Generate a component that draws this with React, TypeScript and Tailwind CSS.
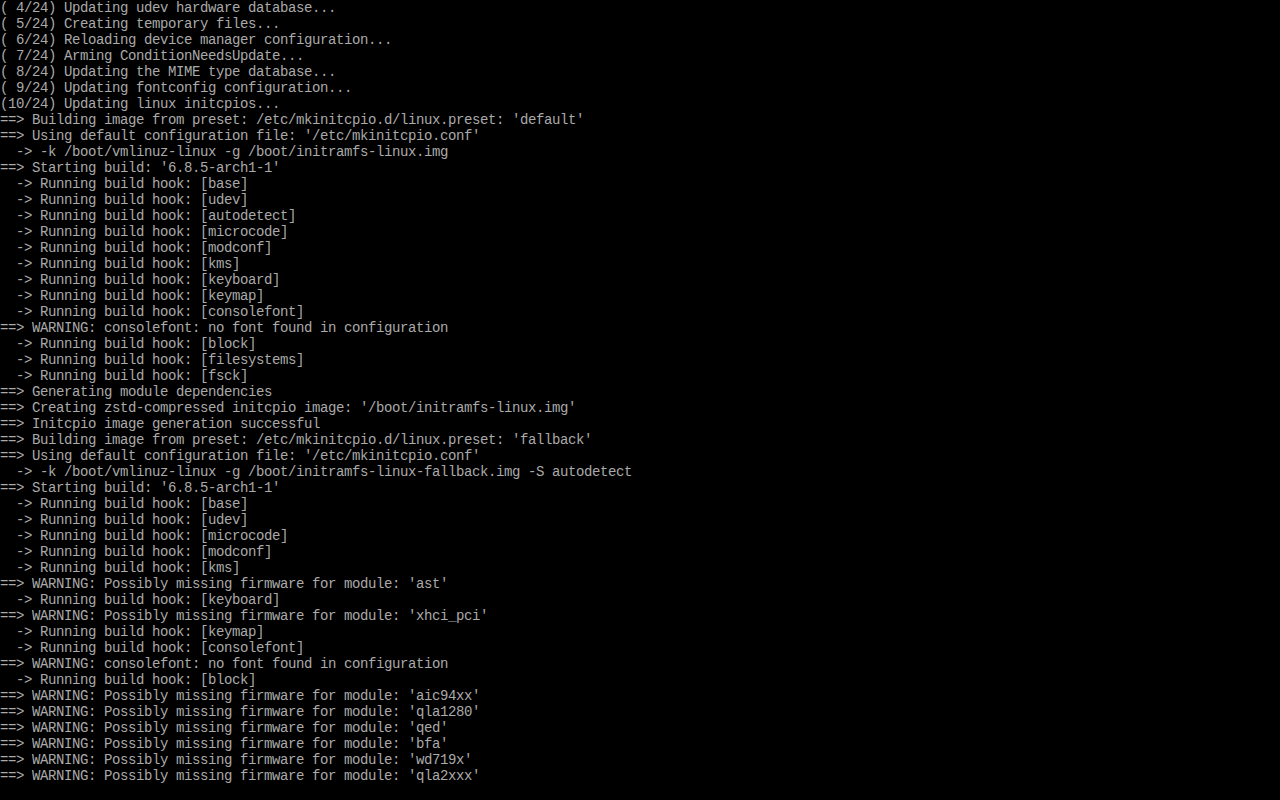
const lines: string[] = [
  "( 4/24) Updating udev hardware database...",
  "( 5/24) Creating temporary files...",
  "( 6/24) Reloading device manager configuration...",
  "( 7/24) Arming ConditionNeedsUpdate...",
  "( 8/24) Updating the MIME type database...",
  "( 9/24) Updating fontconfig configuration...",
  "(10/24) Updating linux initcpios...",
  "==> Building image from preset: /etc/mkinitcpio.d/linux.preset: 'default'",
  "==> Using default configuration file: '/etc/mkinitcpio.conf'",
  "  -> -k /boot/vmlinuz-linux -g /boot/initramfs-linux.img",
  "==> Starting build: '6.8.5-arch1-1'",
  "  -> Running build hook: [base]",
  "  -> Running build hook: [udev]",
  "  -> Running build hook: [autodetect]",
  "  -> Running build hook: [microcode]",
  "  -> Running build hook: [modconf]",
  "  -> Running build hook: [kms]",
  "  -> Running build hook: [keyboard]",
  "  -> Running build hook: [keymap]",
  "  -> Running build hook: [consolefont]",
  "==> WARNING: consolefont: no font found in configuration",
  "  -> Running build hook: [block]",
  "  -> Running build hook: [filesystems]",
  "  -> Running build hook: [fsck]",
  "==> Generating module dependencies",
  "==> Creating zstd-compressed initcpio image: '/boot/initramfs-linux.img'",
  "==> Initcpio image generation successful",
  "==> Building image from preset: /etc/mkinitcpio.d/linux.preset: 'fallback'",
  "==> Using default configuration file: '/etc/mkinitcpio.conf'",
  "  -> -k /boot/vmlinuz-linux -g /boot/initramfs-linux-fallback.img -S autodetect",
  "==> Starting build: '6.8.5-arch1-1'",
  "  -> Running build hook: [base]",
  "  -> Running build hook: [udev]",
  "  -> Running build hook: [microcode]",
  "  -> Running build hook: [modconf]",
  "  -> Running build hook: [kms]",
  "==> WARNING: Possibly missing firmware for module: 'ast'",
  "  -> Running build hook: [keyboard]",
  "==> WARNING: Possibly missing firmware for module: 'xhci_pci'",
  "  -> Running build hook: [keymap]",
  "  -> Running build hook: [consolefont]",
  "==> WARNING: consolefont: no font found in configuration",
  "  -> Running build hook: [block]",
  "==> WARNING: Possibly missing firmware for module: 'aic94xx'",
  "==> WARNING: Possibly missing firmware for module: 'qla1280'",
  "==> WARNING: Possibly missing firmware for module: 'qed'",
  "==> WARNING: Possibly missing firmware for module: 'bfa'",
  "==> WARNING: Possibly missing firmware for module: 'wd719x'",
  "==> WARNING: Possibly missing firmware for module: 'qla2xxx'",
];

export default function App() {
  return (
    <div className="w-[1280px] h-[800px] bg-black overflow-hidden">
      {/* tty output */}
      <div className="flex flex-col font-['Liberation_Mono','DejaVu_Sans_Mono',monospace] text-[14px] tracking-[-0.4px] leading-[16px] text-[#aaaaaa]">
        {lines.map((line, i) => (
          <div key={i} className="h-4 whitespace-pre">
            {line}
          </div>
        ))}
      </div>
    </div>
  );
}
